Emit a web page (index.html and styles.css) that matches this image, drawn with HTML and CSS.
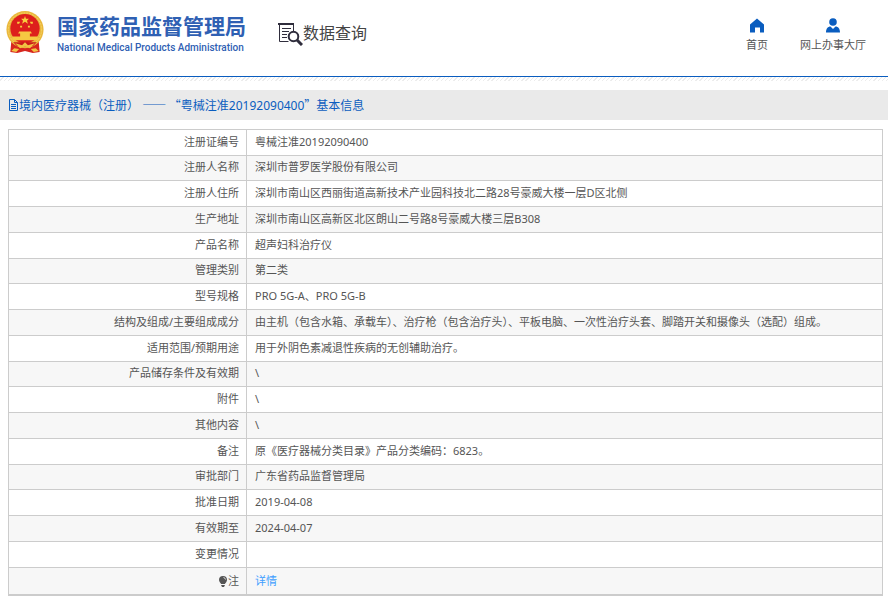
FILE: index.html
```html
<!DOCTYPE html>
<html lang="zh-CN">
<head>
  <meta charset="UTF-8">
  <title>国家药品监督管理局 数据查询</title>
  <link rel="stylesheet" href="styles.css">
</head>
<body>
  <header class="header">
    <a class="logo" href="#">
      <svg class="emblem" viewBox="0 0 40 44" aria-hidden="true">
        <path fill="#d7261e" d="M6 31h28l1 11-7 1-8-2-8 2-7-1z"/>
        <circle cx="20" cy="19" r="19" fill="#eab73c"/>
        <circle cx="20" cy="19" r="17" fill="none" stroke="#f6d664" stroke-width="1" stroke-dasharray="2 1"/>
        <circle cx="20" cy="18" r="15" fill="#dd1f1c"/>
        <path fill="#f8cf3e" d="M20 5l1 3h3l-2 2 1 3-3-2-3 2 1-3-2-2h3zM12 11h3l-1 2h-2zM25 11h3v2h-2zM15 15h2v2h-2zM23 15h2v2h-2z"/>
        <path fill="#f6c842" d="M14 21h12l1 2h-2v3h8v4H7v-4h8v-3h-2z"/>
        <path fill="#c91b19" d="M8 32h24l-4 4H12z"/>
        <path fill="#f2c443" d="M10 33l7 2 3-3 3 3 7-2-5 5-5-2-5 2zM9 38l5 1-3 3-5-1zM31 38l-5 1 3 3 5-1z"/>
      </svg>
      <span class="logo-text">
        <span class="logo-cn">国家药品监督管理局</span>
        <span class="logo-en">National Medical Products Administration</span>
      </span>
    </a>
    <div class="search-title">
      <svg class="search-icon" viewBox="0 0 25 24" fill="none" stroke="#2f2d3c" aria-hidden="true">
        <path stroke-width="2" d="M0 2h16"/>
        <path stroke-width="1" d="M1.500 2v17.500h9M15.500 2v7M4 6.500h9M4 9.500h7M4 12.500h5M4 15.500h5"/>
        <circle cx="15.500" cy="14.500" r="4.800" stroke-width="2"/>
        <path stroke-width="3" d="M19 18l5 5"/>
      </svg>
      <span>数据查询</span>
    </div>
    <nav class="nav">
      <a href="#">
        <svg class="nav-icon" viewBox="0 0 16 16" aria-hidden="true"><path fill="#0a5dbf" d="M8 1l7 6v8h-4V10H6v5H1V7z"/></svg>
        <span>首页</span>
      </a>
      <a href="#">
        <svg class="nav-icon" viewBox="0 0 16 16" aria-hidden="true"><circle cx="8" cy="4.500" r="3.800" fill="#0a5dbf"/><path fill="#0a5dbf" d="M1 15c0-4 2-6 4.500-6L8 11.500 10.500 9C13 9 15 11 15 15z"/></svg>
        <span>网上办事大厅</span>
      </a>
    </nav>
  </header>

  <main>
    <h1 class="page-title">
      <svg class="doc-icon" viewBox="0 0 11 12" fill="none" stroke="#0a5dbf" aria-hidden="true"><path d="M1.500.5h5l3 3v8h-8zM6.500.5v3h3M3 5.500h5M3 7.500h5M3 9.500h5"/></svg>
      <span>境内医疗器械（注册） <span class="cjk">—— “</span>粤械注准20192090400<span class="cjk">”</span>基本信息</span>
    </h1>
    <table class="info">
      <tr><th scope="row">注册证编号</th><td>粤械注准20192090400</td></tr>
      <tr><th scope="row">注册人名称</th><td>深圳市普罗医学股份有限公司</td></tr>
      <tr><th scope="row">注册人住所</th><td>深圳市南山区西丽街道高新技术产业园科技北二路28号豪威大楼一层D区北侧</td></tr>
      <tr><th scope="row">生产地址</th><td>深圳市南山区高新区北区朗山二号路8号豪威大楼三层B308</td></tr>
      <tr><th scope="row">产品名称</th><td>超声妇科治疗仪</td></tr>
      <tr><th scope="row">管理类别</th><td>第二类</td></tr>
      <tr><th scope="row">型号规格</th><td>PRO 5G-A、PRO 5G-B</td></tr>
      <tr><th scope="row">结构及组成/主要组成成分</th><td>由主机（包含水箱、承载车）、治疗枪（包含治疗头）、平板电脑、一次性治疗头套、脚踏开关和摄像头（选配）组成。</td></tr>
      <tr><th scope="row">适用范围/预期用途</th><td>用于外阴色素减退性疾病的无创辅助治疗。</td></tr>
      <tr><th scope="row">产品储存条件及有效期</th><td>\</td></tr>
      <tr><th scope="row">附件</th><td>\</td></tr>
      <tr><th scope="row">其他内容</th><td>\</td></tr>
      <tr><th scope="row">备注</th><td>原《医疗器械分类目录》产品分类编码：6823。</td></tr>
      <tr><th scope="row">审批部门</th><td>广东省药品监督管理局</td></tr>
      <tr><th scope="row">批准日期</th><td>2019-04-08</td></tr>
      <tr><th scope="row">有效期至</th><td>2024-04-07</td></tr>
      <tr><th scope="row">变更情况</th><td></td></tr>
      <tr>
        <th scope="row"><svg class="bulb-icon" viewBox="0 0 10 12" aria-hidden="true"><path fill="#555" d="M5 1a4 4 0 0 1 4 4c0 2-2 3-2 4H3C3 8 1 7 1 5a4 4 0 0 1 4-4zM3 10h4l-1 2H4z"/><path fill="none" stroke="#ddd" d="M5.500 2.500q2 .5 2 2"/></svg>注</th>
        <td><a href="#">详情</a></td>
      </tr>
    </table>
  </main>
</body>
</html>
```

FILE: styles.css
```css
* {
  box-sizing: border-box;
}
body {
  margin: 0;
  background: #fff;
  color: #555;
  font-family: "Noto Sans", "Noto Sans CJK SC", sans-serif;
  font-size: 11px;
}
a {
  color: inherit;
  text-decoration: none;
}
svg {
  flex: none;
}
.header {
  display: flex;
  height: 77px;
  padding: 0 22px 0 5px;
  border-bottom: 1px solid #0a5dbf;
}
.logo {
  display: flex;
  align-items: flex-start;
  gap: 12px;
  padding-top: 11px;
  color: #2f60b3;
}
.emblem {
  width: 40px;
  height: 43px;
}
.logo-text {
  display: flex;
  flex-direction: column;
  white-space: nowrap;
}
.logo-cn {
  font-size: 21px;
  font-weight: bold;
  line-height: 30px;
}
.logo-en {
  font-family: Roboto, "Liberation Sans", sans-serif;
  font-size: 10px;
  font-weight: 500;
  line-height: 14px;
}
.search-title {
  display: flex;
  align-items: flex-start;
  margin-left: 32px;
  padding-top: 22px;
  color: #444;
  font-size: 16px;
  line-height: 22px;
}
.search-icon {
  width: 25px;
  height: 24px;
}
.nav {
  display: flex;
  gap: 32px;
  margin-left: auto;
  padding-top: 17px;
}
.nav a {
  display: flex;
  flex-direction: column;
  align-items: center;
  line-height: 22px;
}
.nav-icon {
  width: 16px;
  height: 17px;
}
/* faint hatching under the header line */
main {
  padding-top: 13px;
  background: repeating-linear-gradient(135deg, #fff 0 2px, #ececec 2px 3px) top / 100% 4px no-repeat;
}
.page-title {
  display: flex;
  align-items: center;
  height: 30px;
  margin: 0 0 9px;
  padding-left: 8px;
  background: #eaeaea;
  color: #0a5dbf;
  font-size: 12px;
  font-weight: normal;
}
.doc-icon {
  width: 11px;
  height: 12px;
}
.cjk {
  font-family: "Noto Sans CJK SC", sans-serif;
}
.info {
  width: calc(100% - 13px);
  margin-left: 8px;
  border-collapse: collapse;
  border-bottom: 2px solid #ccc;
}
.info th,
.info td {
  height: 26px;
  padding: 0 7px 2px 8px;
  border: 1px solid #ccc;
  font-weight: normal;
  line-height: 16px;
  text-align: left;
}
.info th {
  width: 238px;
  text-align: right;
}
.info tr:nth-child(even) {
  background: #f7f7f7;
}
.info tr:nth-child(4n + 2) th,
.info tr:nth-child(4n + 2) td {
  height: 25px;
}
.info tr:last-child th,
.info tr:last-child td {
  height: 27px;
  padding-bottom: 0;
}
.info td a {
  color: #409eff;
}
.bulb-icon {
  width: 10px;
  height: 12px;
  vertical-align: -2px;
}
```
